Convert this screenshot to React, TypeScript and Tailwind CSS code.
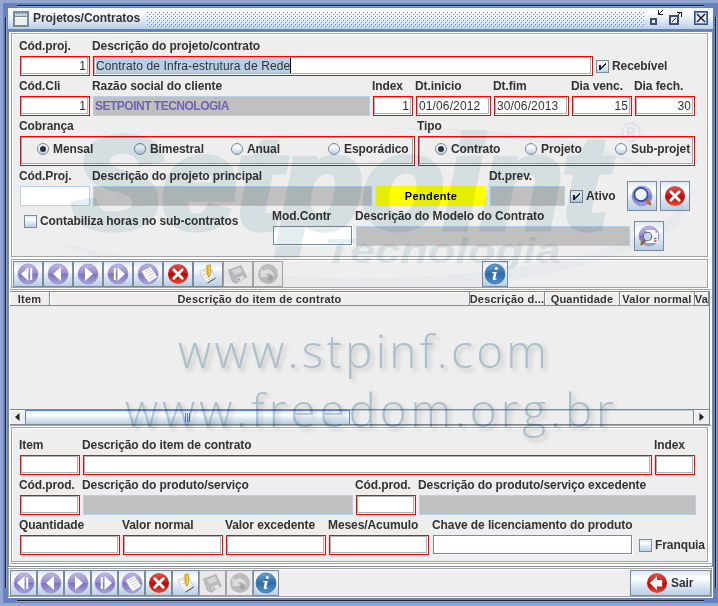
import React from "react";

const OCEAN = "bg-[linear-gradient(180deg,#dde8f3_0%,#ffffff_30%,#dde8f3_60%,#b8cfe5_100%)]";

function Label({ children, w, cls = "" }: { children: React.ReactNode; w: string; cls?: string }) {
  return <div className={`${w} -ml-px shrink-0 h-5 leading-[21px] whitespace-nowrap ${cls}`}>{children}</div>;
}

function Required({ w, children, right }: { w: string; children?: React.ReactNode; right?: boolean }) {
  return (
    <div className={`${w} shrink-0 h-5 border border-[#ff0000] bg-white pr-px pb-px`}>
      <div className={`h-full border border-[#b2b2b2] font-normal leading-[17px] tracking-[0.12px] whitespace-nowrap px-px ${right ? "text-right" : ""}`}>
        {children}
      </div>
    </div>
  );
}

function Disabled({ w, children }: { w: string; children?: React.ReactNode }) {
  return <div className={`${w} shrink-0 h-5 border border-[#b8cfe5] bg-[#c0c0c0] text-[#6e65b0] leading-[18px] pl-px whitespace-nowrap tracking-[-0.5px]`}>{children}</div>;
}

function Plain({ w }: { w: string }) {
  return (
    <div className={`${w} shrink-0 h-5 bg-white pr-px pb-px`}>
      <div className="h-full border border-[#7a8a99] bg-white" />
    </div>
  );
}

function Field({ label, w, kind = "req", children, right }: { label: string; w: string; kind?: string; children?: React.ReactNode; right?: boolean }) {
  return (
    <div className={`${w} shrink-0`}>
      <Label w="w-full">{label}</Label>
      {kind === "req" && <Required w="w-full" right={right}>{children}</Required>}
      {kind === "dis" && <Disabled w="w-full">{children}</Disabled>}
      {kind === "plain" && <Plain w="w-full" />}
      {kind === "soft" && <div className="w-full h-5 border border-[#b8cfe5] bg-white" />}
    </div>
  );
}

function Check({ label, on }: { label: string; on?: boolean }) {
  return (
    <div className="flex gap-[3px] h-[13px] leading-[13px] whitespace-nowrap">
      <div className={`w-[13px] h-[13px] shrink-0 border border-[#7a8a99] ${OCEAN}`}>
        {on && (
          <svg width="11" height="11" viewBox="0 0 11 11" shapeRendering="crispEdges" className="block">
            <path d="M2 4h2v2h1V5h1V4h1V3h1V2h1v2H8v1H7v1H6v1H5v1H4v1H2z" fill="#222" />
          </svg>
        )}
      </div>
      <span>{label}</span>
    </div>
  );
}

function Radio({ label, on, w }: { label: string; on?: boolean; w: string }) {
  return (
    <div className={`${w} shrink-0 flex items-center gap-[4px] h-[14px] leading-[14px] whitespace-nowrap`}>
      <div className={`w-[12px] h-[12px] shrink-0 rounded-full border border-[#7a8a99] flex items-center justify-center ${OCEAN}`}>
        {on && <div className="w-[6px] h-[6px] rounded-full bg-[#333]" />}
      </div>
      <span>{label}</span>
    </div>
  );
}

function Defs() {
  return (
    <svg width="0" height="0" className="absolute">
      <defs>
        <linearGradient id="pur" x1="0" y1="0" x2="0" y2="1">
          <stop offset="0" stopColor="#c0b9e6" />
          <stop offset="0.48" stopColor="#9389cd" />
          <stop offset="0.52" stopColor="#7d73bd" />
          <stop offset="1" stopColor="#aaa2dc" />
        </linearGradient>
        <linearGradient id="red" x1="0" y1="0" x2="0" y2="1">
          <stop offset="0" stopColor="#dd5a50" />
          <stop offset="0.45" stopColor="#c51a15" />
          <stop offset="0.55" stopColor="#b80a0a" />
          <stop offset="1" stopColor="#f0492c" />
        </linearGradient>
        <linearGradient id="blu" x1="0" y1="0" x2="0" y2="1">
          <stop offset="0" stopColor="#6da2cf" />
          <stop offset="0.5" stopColor="#2d6dab" />
          <stop offset="1" stopColor="#4f93cb" />
        </linearGradient>
        <pattern id="bumps" width="4" height="4" patternUnits="userSpaceOnUse">
          <rect x="0" y="0" width="1" height="1" fill="#fff" />
          <rect x="2" y="2" width="1" height="1" fill="#fff" />
          <rect x="1" y="1" width="1" height="1" fill="#6382bf" />
          <rect x="3" y="3" width="1" height="1" fill="#6382bf" />
        </pattern>
      </defs>
    </svg>
  );
}

function Icon({ name }: { name: string }) {
  const purple = <circle cx="11" cy="11" r="10" fill="url(#pur)" stroke="#8b82c6" strokeWidth="0.6" />;
  return (
    <svg width="22" height="22" viewBox="0 0 22 22" className="block shrink-0">
      {name === "first" && <>{purple}<path d="M11.500 4v14L4 11z" fill="#fff" /><path d="M13.200 5h2v12h-2z" fill="#fff" /></>}
      {name === "prev" && <>{purple}<path d="M14 4v14L6 11z" fill="#fff" /></>}
      {name === "next" && <>{purple}<path d="M8 4v14l8-7z" fill="#fff" /></>}
      {name === "last" && <>{purple}<path d="M10.500 4v14l7.500-7z" fill="#fff" /><path d="M6.800 5h2v12h-2z" fill="#fff" /></>}
      {name === "new" && (
        <>
          {purple}
          <path d="M4.500 8 13.500 3.500 20.500 14 12 19.500Q8 16 4.500 8z" fill="#fbfbfd" stroke="#a9a6bd" strokeWidth="0.7" />
          <path d="M8 8.800l5-2.600M9.200 11l5.600-3M10.800 13.300l5.600-3M12.400 15.500l5-2.800" stroke="#c2c0d2" strokeWidth="0.8" />
        </>
      )}
      {name === "cancel" && (
        <>
          <circle cx="11" cy="11" r="10" fill="url(#red)" />
          <path d="M6.800 6.800l8.400 8.400M15.200 6.800l-8.400 8.400" stroke="#fff" strokeWidth="2.9" strokeLinecap="round" />
        </>
      )}
      {name === "edit" && (
        <>
          <path d="M3 8l9.500-4 6.500 11-8.500 5Q5 16 3 8z" fill="#fff" stroke="#b5bac2" strokeWidth="0.7" />
          <path d="M5.500 9l4-1.500M6.500 12l3-1.300M8 15l6-3M10 17.500l7-3.800" stroke="#c2c6cc" strokeWidth="0.8" />
          <path d="M18.500 15l-8 5" stroke="#444" strokeWidth="1" />
          <path d="M9.800 2.500l3.600-.7.500 8.400-1.900 4-2-3.400z" fill="#f3b51a" stroke="#b98310" strokeWidth="0.6" />
          <path d="M12.300 2.200l.2 10" stroke="#ffe27a" strokeWidth="0.8" />
        </>
      )}
      {name === "save" && (
        <>
          <path d="M1.500 7 14 2.500 19.500 14 9 20.500 5 18z" fill="#bcbcbc" stroke="#a6a6a6" strokeWidth="0.6" />
          <path d="M5 7.500 13 4.500l2 4.500-7.500 3z" fill="#d6d6d6" />
          <path d="M9.500 15.500l6.500-3 1.500 3-6 3.300z" fill="#e6e6e6" />
          <path d="M11.500 15.500l1.200 2" stroke="#8c8c8c" strokeWidth="1.3" />
        </>
      )}
      {name === "undo" && (
        <>
          <circle cx="11" cy="11" r="10" fill="#bcbcbc" />
          <path d="M3.500 5v9h8l-2.500-2.800c2.500-1.800 6-.6 8 3C18 8.500 11 3.500 6.200 8z" fill="#dcdcdc" />
          <circle cx="13.500" cy="15" r="2.800" fill="#a6a6a6" />
        </>
      )}
      {name === "info" && (
        <>
          <circle cx="11" cy="11" r="10" fill="url(#blu)" stroke="#2b659d" strokeWidth="0.7" />
          <circle cx="12.400" cy="5.600" r="1.5" fill="#fff" />
          <path d="M8.300 9h4.500l-1.500 6.200q0 .8 1.600.2l-.2.9q-4.200 2-4-.8l1.100-5.200H8z" fill="#fff" />
        </>
      )}
      {name === "search" && (
        <>
          {purple}
          <path d="M14.500 14l4.500 5" stroke="#b96b35" strokeWidth="3" strokeLinecap="round" />
          <circle cx="10" cy="9.500" r="6.6" fill="#eef5fb" stroke="#244fa8" strokeWidth="1.7" />
          <path d="M6.500 9q1-3.500 4.500-3.200" stroke="#fff" strokeWidth="1.2" fill="none" />
        </>
      )}
      {name === "preview" && (
        <>
          {purple}
          <path d="M8 5h9.500v2.500H20V18H8z" fill="#fbfbfd" />
          <path d="M16 13.500h2.500" stroke="#2f9a48" strokeWidth="1.4" />
          <path d="M16 16h2.500" stroke="#d33" strokeWidth="1.4" />
          <path d="M6.500 15l-3 4" stroke="#8c6a34" strokeWidth="2.6" strokeLinecap="round" />
          <circle cx="9.500" cy="11.500" r="4.2" fill="#c9dcf0" stroke="#66707d" strokeWidth="1.1" />
        </>
      )}
      {name === "exit" && (
        <>
          <circle cx="11" cy="11" r="10" fill="url(#red)" />
          <path d="M3.800 11 11 4.200v3.800h5.200v6.500H11v3.500z" fill="#fff" />
        </>
      )}
    </svg>
  );
}

function Btn({ name, w, h = "h-[26px]", off }: { name: string; w: string; h?: string; off?: boolean }) {
  return (
    <div className={`${w} ${h} shrink-0 border flex items-center justify-center overflow-hidden ${off ? "border-[#a3a3a3] bg-[#e9e9e9]" : `border-[#7a8a99] ${OCEAN}`}`}>
      <Icon name={name} />
    </div>
  );
}

const TOOLS: [string, boolean][] = [
  ["first", false], ["prev", false], ["next", false], ["last", false], ["new", false],
  ["cancel", false], ["edit", false], ["save", true], ["undo", true],
];

function Watermark() {
  return (
    <svg width="718" height="606" viewBox="0 0 718 606" className="absolute left-0 top-0 pointer-events-none mix-blend-multiply tracking-normal">
      <path d="M332 129Q380 125 430 133Q600 142 668 178Q708 212 610 247Q500 282 283 279L283 287Q400 292 470 287Q640 262 680 222Q700 180 600 148Q500 122 332 129z" fill="#f9fafd" />
      <path d="M58 242Q120 272 240 284Q400 292 500 283Q300 280 200 268Q110 256 58 242z" fill="#fafafd" />
      <g fill="#e5eef1" fontFamily="Liberation Sans, sans-serif" fontWeight="bold" fontStyle="italic">
        <text x="73" y="228" fontSize="129" textLength="534" lengthAdjust="spacingAndGlyphs" stroke="#e5eef1" strokeWidth="7">Setpoint</text>
        <text x="324" y="263" fontSize="35" textLength="237" lengthAdjust="spacingAndGlyphs">Tecnologia</text>
      </g>
      <text x="621" y="142" fontSize="27" fill="#eeeff9" fontFamily="Liberation Sans, sans-serif">®</text>
      <g fill="#b9cedb" fontFamily="Open Sans, sans-serif" fontWeight="300" fontSize="46" className="[filter:drop-shadow(3px_3px_2px_rgba(0,0,0,0.16))]">
        <text x="178" y="368" textLength="369">www.stpinf.com</text>
        <text x="125" y="427" textLength="489">www.freedom.org.br</text>
      </g>
    </svg>
  );
}

function TitleBar() {
  return (
    <div className="h-[21px] shrink-0 flex items-start bg-[linear-gradient(180deg,#eef4fa_0%,#ffffff_20%,#dde8f3_60%,#b8cfe5_100%)] pl-[5px] pr-[5px]">
      <svg width="16" height="16" shapeRendering="crispEdges" className="block shrink-0 mt-[3px]">
        <rect x="0" y="0" width="16" height="16" rx="1" fill="#7a8a99" />
        <rect x="2" y="2" width="12" height="3" fill="#b8cfe5" />
        <path d="M3 2h1v1h-1zM6 2h1v1h-1zM9 2h1v1h-1zM12 2h1v1h-1z" fill="#6382bf" />
        <rect x="2" y="6" width="12" height="8" fill="#eee" />
        <rect x="2" y="6" width="12" height="1" fill="#fff" />
      </svg>
      <div className="w-[117px] shrink-0 pl-[4px] leading-[21px] whitespace-nowrap tracking-[-0.05px]">Projetos/Contratos</div>
      <svg width="498" height="16" className="block shrink-0 mt-[3px]" shapeRendering="crispEdges">
        <rect width="498" height="16" fill="url(#bumps)" />
      </svg>
      <svg width="64" height="17" className="block ml-auto shrink-0 mt-[2px]" shapeRendering="crispEdges">
        <rect x="6" y="8" width="7" height="7" fill="#3d4d77" />
        <rect x="8" y="10" width="3" height="3" fill="#e3ecf5" />
        <path d="M14 0h1v5h-1zM14 4h5v1h-5zM15 3h1v1h-1zM16 2h1v1h-1zM17 1h1v1h-1zM18 0h1v1h-1z" fill="#222" />
        <rect x="25" y="5" width="10" height="10" fill="#3d4d77" />
        <rect x="27" y="7" width="6" height="6" fill="#e3ecf5" />
        <path d="M28 11h1v1h-1zM29 10h1v1h-1zM30 9h1v1h-1zM31 8h1v1h-1zM34 4h1v1h-1zM35 3h1v1h-1zM36 2h1v1h-1zM33 2h5v1h-5zM37 2h1v5h-1z" fill="#222" />
        <rect x="50" y="1" width="14" height="14" fill="#3d4d77" />
        <rect x="51" y="2" width="12" height="12" fill="#6382bf" />
        <rect x="52" y="3" width="10" height="10" fill="#e3ecf5" />
        <path d="M53 4l8 8M61 4l-8 8" stroke="#222" strokeWidth="1.5" shapeRendering="auto" />
      </svg>
    </div>
  );
}

function Etched({ cls, children }: { cls: string; children?: React.ReactNode }) {
  return (
    <div className={`${cls} shrink-0 bg-white pr-px pb-px`}>
      <div className="h-full border border-[#a3a3a3] bg-[#eeeeee] shadow-[inset_1px_1px_0_#fff]">{children}</div>
    </div>
  );
}

const COLUMNS: [string, string][] = [
  ["Item", "w-[40px]"],
  ["Descrição do item de contrato", "w-[420px]"],
  ["Descrição d...", "w-[75px]"],
  ["Quantidade", "w-[75px]"],
  ["Valor normal", "w-[75px]"],
  ["Va", "w-[14px]"],
];

function Table() {
  return (
    <div className="h-[134px] w-[700px] shrink-0 border border-[#7a8a99] border-l-0 flex flex-col bg-[#eeeeee]">
      <div className="h-[14px] shrink-0 flex text-[11px] leading-[15px] border-b border-[#7a8a99]">
        {COLUMNS.map(([name, w]) => (
          <div key={name} className={`${w} shrink-0 flex justify-center overflow-hidden whitespace-nowrap border-r border-[#7a8a99] shadow-[inset_1px_1px_0_#fff] tracking-[0.22px]`}>
            {name}
          </div>
        ))}
      </div>
      <div className="flex-1" />
      <div className="h-[15px] shrink-0 flex border-t border-[#7a8a99]">
        <div className="w-[15px] flex items-center justify-center shadow-[inset_1px_1px_0_#fff]">
          <svg width="5" height="8"><path d="M4.500 0v8L0 4z" fill="#222" /></svg>
        </div>
        <div className={`w-[325px] border border-b-0 border-[#6382bf] ${OCEAN} flex items-center justify-center gap-px`}>
          <div className="w-px h-[9px] bg-[#6382bf]" />
          <div className="w-px h-[9px] bg-[#6382bf]" />
          <div className="w-px h-[9px] bg-[#6382bf]" />
        </div>
        <div className="flex-1 border-t border-[#b8cfe5]" />
        <div className="w-[16px] border-l border-[#7a8a99] flex items-center justify-center shadow-[inset_1px_1px_0_#fff]">
          <svg width="5" height="8"><path d="M.500 0v8L5 4z" fill="#222" /></svg>
        </div>
      </div>
    </div>
  );
}

export default function App() {
  return (
    <div className="relative w-[718px] h-[606px] overflow-hidden bg-[#94a6d2] pl-[3px] pt-[3px] font-['Liberation_Sans',Arial,sans-serif] text-[12px] font-bold tracking-[-0.09px] text-[#333333]">
      <Defs />
      <div className="relative w-[715px] h-[600px] bg-[#6382bf] p-[5px]">
        <div className="absolute left-[14px] top-[2px] w-[687px] h-[2px] bg-[#222] border-b border-[#94a6d2]" />
        <div className="absolute left-[14px] bottom-[1px] w-[687px] h-[2px] bg-[#222] border-b border-[#94a6d2]" />
        <div className="absolute left-[2px] top-[14px] w-[2px] h-[571px] bg-[#222] border-r border-[#94a6d2]" />
        <div className="absolute right-[1px] top-[14px] w-[2px] h-[571px] bg-[#222] border-r border-[#94a6d2]" />

        <div className="w-[705px] h-[590px] bg-[#eeeeee] flex flex-col">
          <TitleBar />
          <div className="h-[2px] shrink-0 bg-[#6382bf]" />
          <div className="h-[536px] shrink-0 border border-[#7a8a99] bg-white pl-px pr-px pt-px flex flex-col">
            <Etched cls="w-[698px] h-[225px] ml-px">
              <div className="flex flex-col pl-[8px] pt-[2px]">
                <div className="flex gap-[3px] h-[40px]">
                  <Field label="Cód.proj." w="w-[70px]" right>1</Field>
                  <Field label="Descrição do projeto/contrato" w="w-[500px]">
                    <span className="inline-block h-[15px] leading-[16px] bg-[#b8cfe5] border-r border-black">Contrato de Infra-estrutura de Rede</span>
                  </Field>
                  <div className="pt-[24px]"><Check label="Recebível" on /></div>
                </div>
                <div className="flex gap-[3px] h-[40px]">
                  <Field label="Cód.Cli" w="w-[70px]" right>1</Field>
                  <Field label="Razão social do cliente" w="w-[277px]" kind="dis">SETPOINT TECNOLOGIA</Field>
                  <Field label="Index" w="w-[40px]" right>1</Field>
                  <Field label="Dt.inicio" w="w-[75px]">01/06/2012</Field>
                  <Field label="Dt.fim" w="w-[75px]">30/06/2013</Field>
                  <Field label="Dia venc." w="w-[60px]" right>15</Field>
                  <Field label="Dia fech." w="w-[60px]" right>30</Field>
                </div>
                <div className="flex gap-[3px] h-[50px]">
                  <div className="w-[395px]">
                    <Label w="w-full">Cobrança</Label>
                    <div className="h-[30px] border border-[#ff0000] bg-white pr-px pb-px">
                      <div className="h-full border border-[#a3a3a3] bg-[#eee] shadow-[inset_1px_1px_0_#fff] flex pt-[4px] pl-[15px]">
                        <Radio label="Mensal" w="w-[97px]" on />
                        <Radio label="Bimestral" w="w-[97px]" />
                        <Radio label="Anual" w="w-[97px]" />
                        <Radio label="Esporádico" w="w-[80px]" />
                      </div>
                    </div>
                  </div>
                  <div className="w-[277px]">
                    <Label w="w-full">Tipo</Label>
                    <div className="h-[30px] border border-[#ff0000] bg-white pr-px pb-px">
                      <div className="h-full border border-[#a3a3a3] bg-[#eee] shadow-[inset_1px_1px_0_#fff] flex pt-[4px] pl-[15px] overflow-hidden">
                        <Radio label="Contrato" w="w-[90px]" on />
                        <Radio label="Projeto" w="w-[90px]" />
                        <Radio label="Sub-projet" w="w-[76px]" />
                      </div>
                    </div>
                  </div>
                </div>
                <div className="flex h-[40px]">
                  <Field label="Cód.Proj." w="w-[70px]" kind="soft" />
                  <div className="ml-[3px]"><Field label="Descrição do projeto principal" w="w-[279px]" kind="dis" /></div>
                  <div className="ml-[4px] mt-[20px] w-[110px] h-5 bg-[#ffff00] text-black text-center leading-[20px] text-[11px] tracking-[0.4px]">Pendente</div>
                  <div className="ml-[4px]"><Field label="Dt.prev." w="w-[75px]" kind="dis" /></div>
                  <div className="ml-[5px] mt-[24px] w-[57px]"><Check label="Ativo" on /></div>
                  <div className="mt-[15px] flex gap-[3px]">
                    <Btn name="search" w="w-[30px]" h="h-[30px]" />
                    <Btn name="cancel" w="w-[30px]" h="h-[30px]" />
                  </div>
                </div>
                <div className="flex h-[45px]">
                  <div className="pl-[4px] pt-[9px] w-[253px]"><Check label="Contabiliza horas no sub-contratos" /></div>
                  <Field label="Mod.Contr" w="w-[80px]" kind="plain" />
                  <div className="ml-[3px]"><Field label="Descrição do Modelo do Contrato" w="w-[274px]" kind="dis" /></div>
                  <div className="ml-[4px] mt-[15px]"><Btn name="preview" w="w-[30px]" h="h-[30px]" /></div>
                </div>
              </div>
            </Etched>
            <div className="h-px shrink-0" />
            <Etched cls="w-[698px] h-[30px] ml-px">
              <div className="flex pl-px pt-px">
                {TOOLS.map(([n, off]) => <Btn key={n} name={n} w="w-[30px]" off={off} />)}
                <div className="w-[199px]" />
                <Btn name="info" w="w-[26px]" />
              </div>
            </Etched>
            <div className="h-px shrink-0 bg-[#a3a3a3]" />
            <div className="h-px shrink-0" />
            <Table />
            <div className="h-px shrink-0 bg-[#a3a3a3]" />
            <div className="h-px shrink-0" />
            <Etched cls="w-[698px] h-[136px] ml-px">
              <div className="flex flex-col pl-[8px] pt-[7px]">
                <div className="flex gap-[3px] h-[40px]">
                  <Field label="Item" w="w-[60px]" />
                  <Field label="Descrição do item de contrato" w="w-[569px]" />
                  <Field label="Index" w="w-[40px]" />
                </div>
                <div className="flex gap-[3px] h-[40px]">
                  <Field label="Cód.prod." w="w-[60px]" />
                  <Field label="Descrição do produto/serviço" w="w-[270px]" kind="dis" />
                  <Field label="Cód.prod." w="w-[60px]" />
                  <Field label="Descrição do produto/serviço excedente" w="w-[277px]" kind="dis" />
                </div>
                <div className="flex gap-[3px] h-[40px]">
                  <Field label="Quantidade" w="w-[100px]" />
                  <Field label="Valor normal" w="w-[100px]" />
                  <Field label="Valor excedente" w="w-[100px]" />
                  <Field label="Meses/Acumulo" w="w-[100px]" />
                  <div className="ml-px"><Field label="Chave de licenciamento do produto" w="w-[200px]" kind="plain" /></div>
                  <div className="pl-[3px] pt-[24px]"><Check label="Franquia" /></div>
                </div>
              </div>
            </Etched>
            <div className="h-px shrink-0 bg-[#a3a3a3]" />
          </div>
          <div className="h-px shrink-0 bg-white" />
          <Etched cls="w-[705px] h-[30px]">
            <div className="flex pl-px pt-px">
              {TOOLS.map(([n, off]) => <Btn key={n} name={n} w="w-[27px]" off={off} />)}
              <Btn name="info" w="w-[26px]" />
              <div className="w-[351px]" />
              <div className={`w-[81px] h-[26px] border border-[#7a8a99] ${OCEAN} flex items-center pl-[15px] gap-[3px]`}>
                <Icon name="exit" />
                <span>Sair</span>
              </div>
            </div>
          </Etched>
        </div>
      </div>
      <Watermark />
    </div>
  );
}
